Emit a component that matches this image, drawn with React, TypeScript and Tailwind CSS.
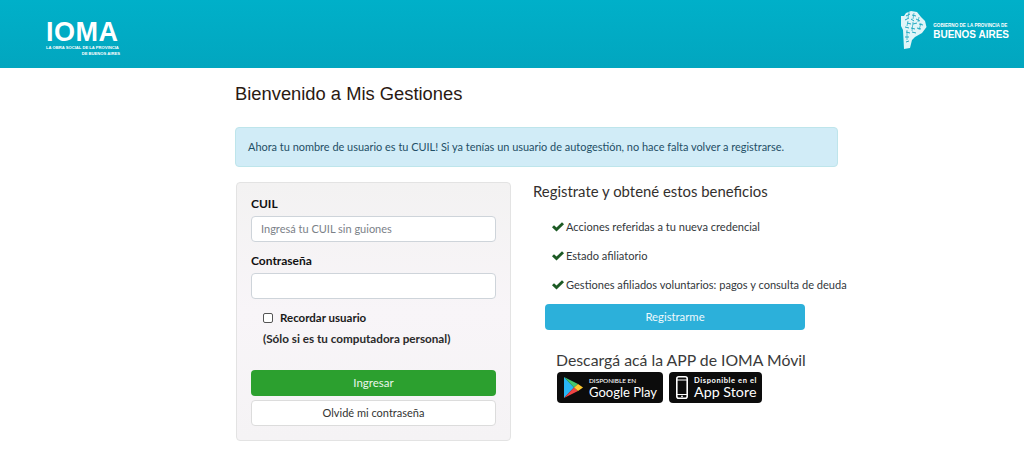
const BENEFITS = [
  "Acciones referidas a tu nueva credencial",
  "Estado afiliatorio",
  "Gestiones afiliados voluntarios: pagos y consulta de deuda",
];

function ProvinceMark() {
  return (
    <svg width="26" height="40" viewBox="0 0 26 40" className="shrink-0">
      <path d="M0 6 L3 6 L5 3 L10 1 L16 2 L20 7 L24 11 L25.5 17 L21 23 L14 27 L11 30 L9 38 L3 39 L2 20 L0 16 Z" fill="#fff" opacity="0.88" />
      <path d="M5 6 L9 4 M11 5 L15 6 M4 10 L8 8 M10 9 L13 11 M15 9 L19 11 M6 13 L10 14 M12 14 L16 13 M18 14 L22 15 M4 17 L8 18 M10 18 L14 19 M16 18 L20 19 M5 22 L9 23 M11 22 L15 23 M4 27 L8 27 M5 32 L8 31" stroke="#1fa9c2" strokeWidth="1" fill="none" />
      <path d="M8 2 L7 8 M13 3 L12 9 M18 7 L17 12 M7 11 L6 16 M12 12 L11 21 M20 13 L18 20 M6 20 L6 30" stroke="#1fa9c2" strokeWidth="0.7" fill="none" />
    </svg>
  );
}

function CheckMark() {
  return (
    <svg width="12" height="10" viewBox="0 0 12 10" className="mr-[2px] mb-[1px] shrink-0">
      <path d="M0 5.2 L2 3.2 L4.5 5.6 L10 0.2 L12 2.2 L4.5 9.6 Z" fill="#1c5a24" />
    </svg>
  );
}

function PlayIcon() {
  return (
    <svg width="19" height="21" viewBox="0 0 19 21" className="shrink-0">
      <path d="M0 0 L10 10.5 L0 21 Z" fill="#29b6f6" />
      <path d="M0 0 L14 7 L10 10.5 Z" fill="#43c66f" />
      <path d="M0 21 L14 14 L10 10.5 Z" fill="#ee4444" />
      <path d="M14 7 L19 10.5 L14 14 L10 10.5 Z" fill="#fdc82f" />
    </svg>
  );
}

function PhoneIcon() {
  return (
    <svg width="12" height="23" viewBox="0 0 12 23" className="shrink-0">
      <rect x="0.8" y="0.8" width="10.4" height="21.4" rx="2" fill="none" stroke="#fff" strokeWidth="1.6" />
      <path d="M1 4 H11 M1 18.5 H11" stroke="#fff" strokeWidth="1" />
      <circle cx="6" cy="20.3" r="0.9" fill="#fff" />
    </svg>
  );
}

export default function App() {
  return (
    <div className="h-[476px] w-[1024px] overflow-hidden bg-white font-['Lato','Noto_Sans',sans-serif] text-[#212529]">
      {/* Header */}
      <header className="flex h-[68px] items-start justify-between bg-gradient-to-b from-[#00b0c9] to-[#02a6bf] pl-[46px] pr-[15px]">
        <div className="pt-[21px] font-['Liberation_Sans',sans-serif] text-white">
          <div className="text-[27px] leading-[23px] font-bold tracking-[0.5px]">IOMA</div>
          <div className="mt-[1px] w-[74px] text-right text-[4.15px] leading-[6px] font-bold whitespace-nowrap">
            <div className="text-left">LA OBRA SOCIAL DE LA PROVINCIA</div>
            <div>DE BUENOS AIRES</div>
          </div>
        </div>
        <div className="flex items-start gap-[6px] pt-[10px] font-['Liberation_Sans',sans-serif] text-white">
          <ProvinceMark />
          <div className="pt-[13px]">
            <div className="text-[4.6px] leading-[6px] font-bold whitespace-nowrap">GOBIERNO DE LA PROVINCIA DE</div>
            <div className="text-[10px] leading-[11px] font-bold whitespace-nowrap">BUENOS AIRES</div>
          </div>
        </div>
      </header>

      <main className="ml-[235px] w-[603px]">
        <h1 className="mt-[15px] font-['Liberation_Sans',sans-serif] text-[18.35px] leading-[22px] text-[#2a1a12]">
          Bienvenido a Mis Gestiones
        </h1>

        <div className="mt-[22px] flex h-[40px] items-center rounded-[4px] border border-[#bee5eb] bg-[#d1ecf7] pl-[12px] text-[10.95px] whitespace-nowrap text-[#1f4f66]">
          Ahora tu nombre de usuario es tu CUIL! Si ya tenías un usuario de autogestión, no hace falta volver a registrarse.
        </div>

        <div className="mt-[15px] flex items-start">
          {/* Login */}
          <form className="ml-[1px] h-[259px] w-[275px] shrink-0 rounded-[4px] border border-[#e3e3e3] bg-gradient-to-b from-[#f3f2f2] via-[#f8f5f8] to-[#f5f3f5] px-[14px] pt-[13px]">
            <label className="block text-[12px] leading-[15px] font-bold text-[#111]">CUIL</label>
            <div className="mt-[5px] flex h-[26px] items-center rounded-[4px] border border-[#ced4da] bg-white pl-[9px] text-[11px] text-[#7b8188]">
              Ingresá tu CUIL sin guiones
            </div>
            <label className="mt-[11px] block text-[12px] leading-[15px] font-bold text-[#111]">Contraseña</label>
            <div className="mt-[5px] h-[26px] rounded-[4px] border border-[#ced4da] bg-white" />
            <div className="mt-[12px] flex items-center pl-[12px]">
              <span className="h-[10px] w-[10px] rounded-[2px] border border-[#555] bg-white" />
              <span className="ml-[7px] text-[11.5px] leading-[14px] font-bold text-[#1a1a1a]">Recordar usuario</span>
            </div>
            <p className="mt-[6px] pl-[12px] text-[11.7px] leading-[14px] font-bold text-[#2a2a2a]">
              (Sólo si es tu computadora personal)
            </p>
            <div className="mt-[25px] flex h-[26px] items-center justify-center rounded-[4px] bg-[#2ca02f] text-[11.5px] text-[#eaf6ea]">
              Ingresar
            </div>
            <div className="mt-[4px] flex h-[26px] items-center justify-center rounded-[4px] border border-[#dcdcdc] bg-white text-[11px] text-[#333]">
              Olvidé mi contraseña
            </div>
          </form>

          {/* Benefits */}
          <section className="ml-[22px] min-w-0 flex-1">
            <h2 className="text-[14.9px] leading-[18px] whitespace-nowrap text-[#33302e]">
              Registrate y obtené estos beneficios
            </h2>
            <ul className="mt-[18px] flex flex-col gap-[11px] pl-[19px]">
              {BENEFITS.map((item) => (
                <li key={item} className="flex h-[18px] items-center text-[11.07px] whitespace-nowrap text-[#33383c]">
                  <CheckMark />
                  {item}
                </li>
              ))}
            </ul>
            <div className="mt-[10px] ml-[12px] flex h-[26px] w-[260px] items-center justify-center rounded-[4px] bg-[#2cb0da] text-[11.3px] text-[#eef9fd]">
              Registrarme
            </div>
            <h3 className="mt-[21px] ml-[23px] text-[15.8px] leading-[18px] whitespace-nowrap text-[#3a3a3a]">
              Descargá acá la APP de IOMA Móvil
            </h3>
            <div className="mt-[3px] ml-[24px] flex gap-[6px] text-white">
              <div className="flex h-[31px] w-[106px] items-center gap-[6px] rounded-[4px] bg-[#0c0c0c] pl-[7px]">
                <PlayIcon />
                <div className="min-w-0">
                  <div className="text-[6.4px] leading-[8px] font-medium whitespace-nowrap">DISPONIBLE EN</div>
                  <div className="text-[13px] leading-[14px] whitespace-nowrap">Google Play</div>
                </div>
              </div>
              <div className="flex h-[31px] w-[93px] items-center gap-[6px] rounded-[4px] bg-[#0c0c0c] pl-[7px]">
                <PhoneIcon />
                <div className="min-w-0">
                  <div className="text-[7.5px] leading-[9px] font-bold tracking-[0.6px] whitespace-nowrap">Disponible en el</div>
                  <div className="text-[14.3px] leading-[14px] whitespace-nowrap">App Store</div>
                </div>
              </div>
            </div>
          </section>
        </div>
      </main>
    </div>
  );
}
